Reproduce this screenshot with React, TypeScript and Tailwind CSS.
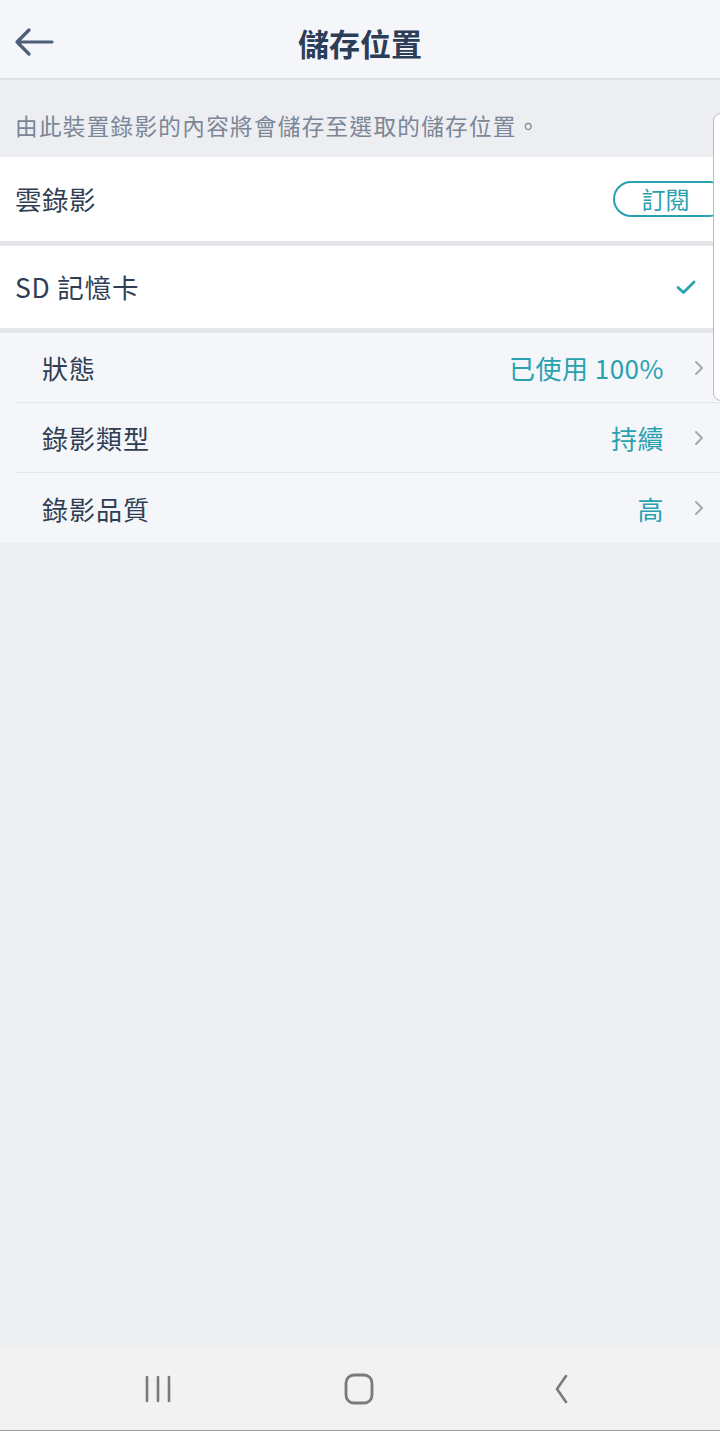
import React from "react";

const font = { fontFamily: '"Noto Sans CJK TC", "Noto Sans", sans-serif' };

function Chevron() {
  return (
    <svg width="12" height="18" viewBox="0 0 12 18" className="shrink-0">
      <path d="M3 3 L9 9 L3 15" fill="none" stroke="#a3a9b1" strokeWidth="2" strokeLinecap="round" strokeLinejoin="round" />
    </svg>
  );
}

function SubRow({ label, value, last }: { label: string; value: string; last?: boolean }) {
  return (
    <div className="pl-[15px]">
      <div className={`flex h-[70px] items-center justify-between pl-[27px] pr-[15px] ${last ? "" : "border-b border-[#e3e6ea]"}`}>
        <span className="text-[26px] tracking-[1px] text-[#2f3e54]">{label}</span>
        <div className="flex items-center gap-[29px]">
          <span className="text-[26px] tracking-[0.5px] text-[#2aa1b1]">{value}</span>
          <Chevron />
        </div>
      </div>
    </div>
  );
}

export default function App() {
  return (
    <div className="relative flex h-[1431px] w-[720px] flex-col overflow-hidden bg-[#eceef2]" style={font}>
      {/* Header */}
      <div className="relative flex h-[80px] shrink-0 items-center justify-center border-b-2 border-[#dfe2e6] bg-[#f5f6fa]">
        <svg width="42" height="32" viewBox="0 0 42 32" className="absolute left-[13px] top-[26px]">
          <path d="M39 16 H4 M16 4 L4 16 L16 28" fill="none" stroke="#4d5f76" strokeWidth="3.2" strokeLinecap="round" strokeLinejoin="round" />
        </svg>
        <span className="pt-[8px] text-[31px] font-bold text-[#2b3d57]">儲存位置</span>
      </div>

      {/* Description */}
      <div className="flex h-[77px] shrink-0 items-center px-[15px] pt-[14px]">
        <span className="text-[22.6px] tracking-[1.3px] text-[#7b8696]">由此裝置錄影的內容將會儲存至選取的儲存位置。</span>
      </div>

      {/* Cloud recording */}
      <div className="flex h-[84px] shrink-0 items-center justify-between bg-white pl-[15px]">
        <span className="text-[26.5px] tracking-[0.5px] text-[#2f3e54]">雲錄影</span>
        <div className="mr-[-8px] flex h-[36px] w-[115px] items-center justify-center rounded-full border-2 border-[#2aa1b1]">
          <span className="pr-[10px] text-[24px] leading-none text-[#2aa1b1]">訂閱</span>
        </div>
      </div>
      <div className="h-[5px] shrink-0 bg-[#e4e6ea]" />

      {/* SD card */}
      <div className="flex h-[82px] shrink-0 items-center justify-between bg-white pl-[15px] pr-[24px]">
        <span className="text-[26.5px] tracking-[0.8px] text-[#2f3e54]">SD 記憶卡</span>
        <svg width="20" height="16" viewBox="0 0 20 16">
          <path d="M2 8.5 L7.5 13.5 L18 3" fill="none" stroke="#2aa1b1" strokeWidth="2.8" strokeLinecap="round" strokeLinejoin="round" />
        </svg>
      </div>
      <div className="h-[5px] shrink-0 bg-[#e4e6ea]" />

      {/* Sub settings */}
      <div className="shrink-0 bg-[#f4f6fa]">
        <SubRow label="狀態" value="已使用 100%" />
        <SubRow label="錄影類型" value="持續" />
        <SubRow label="錄影品質" value="高" last />
      </div>

      <div className="flex-1" />

      {/* Nav bar */}
      <div className="flex h-[84px] shrink-0 items-center gap-[141px] border-b border-[#9a9a9a] bg-[#f2f2f2] pl-[128px]">
        <div className="flex w-[60px] justify-center">
          <svg width="30" height="30" viewBox="0 0 30 30">
            <path d="M4 3 V27 M15 3 V27 M26 3 V27" stroke="#7a7a7a" strokeWidth="2.6" strokeLinecap="round" />
          </svg>
        </div>
        <div className="flex w-[60px] justify-center">
          <svg width="32" height="32" viewBox="0 0 32 32">
            <rect x="3" y="2" width="26" height="28" rx="8" fill="none" stroke="#7a7a7a" strokeWidth="2.8" />
          </svg>
        </div>
        <div className="flex w-[60px] justify-center">
          <svg width="24" height="32" viewBox="0 0 24 32">
            <path d="M18 3 L9 16 L18 29" fill="none" stroke="#7a7a7a" strokeWidth="2.6" strokeLinecap="round" strokeLinejoin="round" />
          </svg>
        </div>
      </div>

      {/* Edge panel handle overlay */}
      <div className="absolute left-[713px] top-[113px] h-[288px] w-[20px] rounded-l-[8px] border border-[#b9bcc0] bg-white" />
    </div>
  );
}
